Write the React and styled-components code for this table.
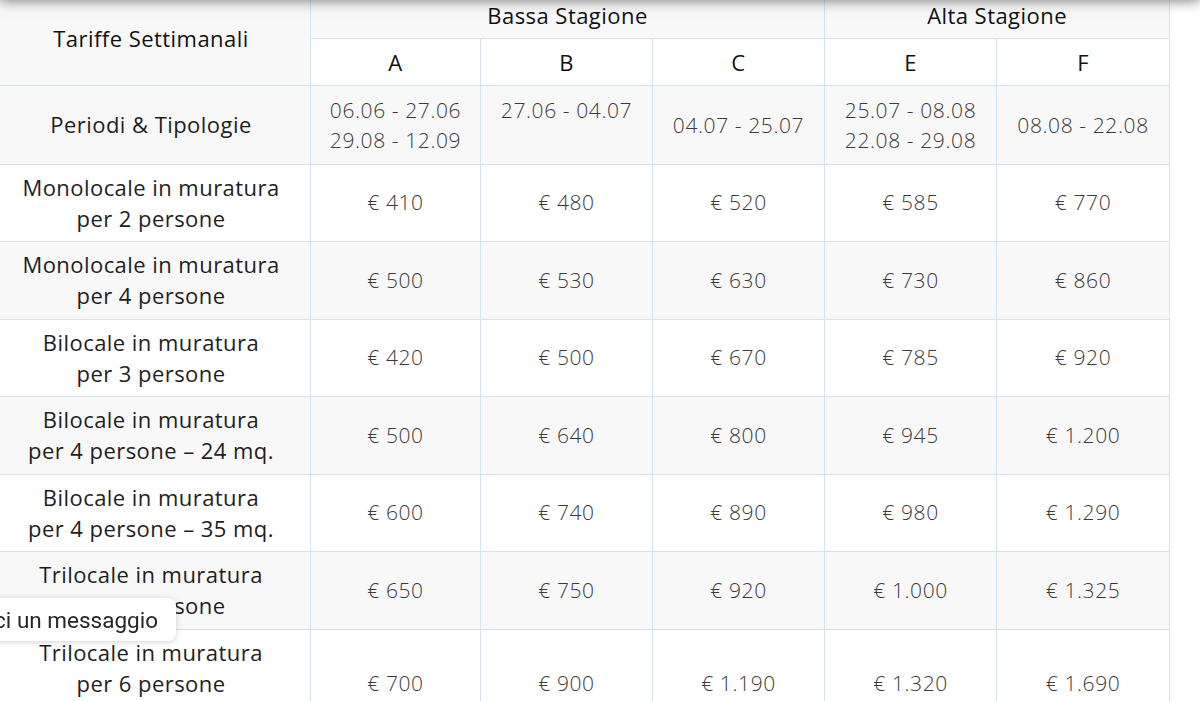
import React from "react";
import styled, { createGlobalStyle } from "styled-components";

const GlobalStyle = createGlobalStyle`
  html, body { margin: 0; padding: 0; background: #ffffff; overflow: hidden; }
  body { font-family: "Open Sans", "Noto Sans", sans-serif; }
`;

const Page = styled.div`
  width: 1200px;
  height: 701px;
  overflow: hidden;
  position: relative;
  background: #ffffff;
`;

const TopShadow = styled.div`
  position: fixed;
  top: -40px;
  left: 0;
  right: 0;
  height: 40px;
  background: #ffffff;
  box-shadow: 0 1px 12px rgba(0, 0, 0, 0.5);
  z-index: 5;
`;

const TableWrap = styled.div`
  margin: -9px 0 0 -9px;
  width: 1179px;
`;

const Table = styled.table`
  width: 100%;
  border-collapse: collapse;
  table-layout: fixed;
  font-family: "Open Sans", "Noto Sans", sans-serif;
  color: #1e1e1e;
  border-right: 1px solid #d3e3f0;

  tr:nth-child(odd) { background: #f8f8f8; }
  tr:nth-child(even) { background: #ffffff; }
`;

const Cell = styled.td`
  border: 1px solid #d3e3f0;
  padding: 7.25px 8px;
  text-align: center;
  vertical-align: ${(p) => (p.$top ? "top" : "middle")};
  font-size: 22px;
  letter-spacing: 0.45px;
  line-height: 31px;
  font-weight: 400;
  color: #1e1e1e;
`;

const HeadCell = styled(Cell)`
  color: #111111;
  padding-top: 7.5px;
  padding-bottom: 7.5px;
`;

const ValueCell = styled(Cell)`
  font-weight: 300;
  color: #3a3a3a;
  font-size: 21px;
  letter-spacing: 0.6px;
`;

const DateCell = styled(ValueCell)`
  line-height: 30px;
  padding-top: 8.8px;
  padding-bottom: 8.8px;
`;

const ChatBubble = styled.div`
  position: fixed;
  top: 598px;
  right: calc(100% - 176px);
  height: 43px;
  display: flex;
  align-items: center;
  padding: 0 18px 0 16px;
  background: #ffffff;
  border-radius: 8px;
  box-shadow: 0 1px 6px rgba(0, 0, 0, 0.18);
  font-family: Roboto, "Noto Sans", sans-serif;
  font-size: 22.5px;
  color: #262626;
  white-space: nowrap;
  z-index: 6;
`;

const rows = [
  ["Monolocale in muratura", "per 2 persone", ["€ 410", "€ 480", "€ 520", "€ 585", "€ 770"]],
  ["Monolocale in muratura", "per 4 persone", ["€ 500", "€ 530", "€ 630", "€ 730", "€ 860"]],
  ["Bilocale in muratura", "per 3 persone", ["€ 420", "€ 500", "€ 670", "€ 785", "€ 920"]],
  ["Bilocale in muratura", "per 4 persone – 24 mq.", ["€ 500", "€ 640", "€ 800", "€ 945", "€ 1.200"]],
  ["Bilocale in muratura", "per 4 persone – 35 mq.", ["€ 600", "€ 740", "€ 890", "€ 980", "€ 1.290"]],
  ["Trilocale in muratura", "per 4 persone", ["€ 650", "€ 750", "€ 920", "€ 1.000", "€ 1.325"]],
  ["Trilocale in muratura", "per 6 persone", ["€ 700", "€ 900", "€ 1.190", "€ 1.320", "€ 1.690"], "con doppi servizi"],
];

export default function App() {
  return (
    <Page>
      <GlobalStyle />
      <TopShadow />
      <TableWrap>
        <Table>
          <colgroup>
            <col style={{ width: "319px" }} />
            <col style={{ width: "170px" }} />
            <col style={{ width: "172px" }} />
            <col style={{ width: "172px" }} />
            <col style={{ width: "172px" }} />
            <col style={{ width: "173px" }} />
          </colgroup>
          <tbody>
            <tr>
              <HeadCell as="th" rowSpan={2}>Tariffe Settimanali</HeadCell>
              <HeadCell as="th" colSpan={3}>Bassa Stagione</HeadCell>
              <HeadCell as="th" colSpan={2}>Alta Stagione</HeadCell>
            </tr>
            <tr>
              {["A", "B", "C", "E", "F"].map((l) => (
                <HeadCell as="th" key={l}>{l}</HeadCell>
              ))}
            </tr>
            <tr>
              <Cell>Periodi &amp; Tipologie</Cell>
              <DateCell>06.06 - 27.06<br />29.08 - 12.09</DateCell>
              <DateCell $top>27.06 - 04.07</DateCell>
              <DateCell>04.07 - 25.07</DateCell>
              <DateCell>25.07 - 08.08<br />22.08 - 29.08</DateCell>
              <DateCell>08.08 - 22.08</DateCell>
            </tr>
            {rows.map(([a, b, vals, c], i) => (
              <tr key={i}>
                <Cell>
                  {a}<br />{b}{c ? <><br />{c}</> : null}
                </Cell>
                {vals.map((v, j) => (
                  <ValueCell key={j}>{v}</ValueCell>
                ))}
              </tr>
            ))}
          </tbody>
        </Table>
      </TableWrap>
      <ChatBubble>Scrivici un messaggio</ChatBubble>
    </Page>
  );
}
